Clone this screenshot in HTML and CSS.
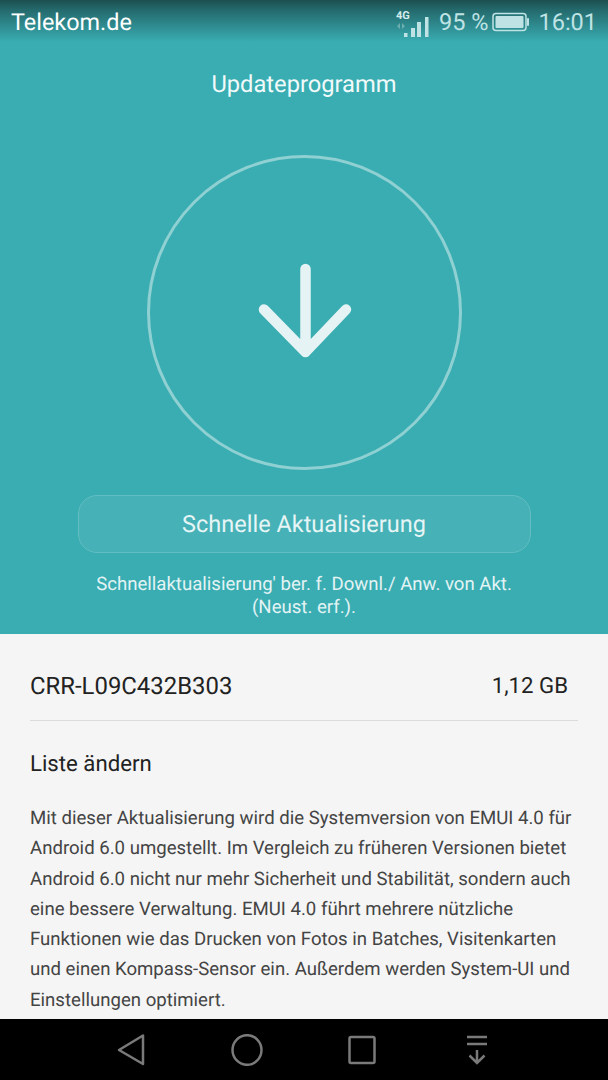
FILE: index.html
```html
<!DOCTYPE html>
<html>
<head>
    <title>Updateprogramm</title>
    <link rel="stylesheet" href="styles.css">
</head>
<body>
    <div class="phone">
        <div class="top">
            <div class="statusbar">
                <span class="carrier">Telekom.de</span>
                <div class="status-right">
                    <svg class="signal" width="34" height="32" viewBox="0 0 34 32">
                        <text x="1" y="13" class="net">4G</text>
                        <path d="M5 17l-3 3 3 3zM7 17l3 3-3 3z" fill="#fff" opacity="0.3"/>
                        <rect x="9" y="27" width="3.500" height="4" fill="#bfe3e4"/>
                        <rect x="16" y="22" width="4" height="9" fill="#bfe3e4"/>
                        <rect x="22" y="16" width="4" height="15" fill="#bfe3e4"/>
                        <rect x="30" y="11" width="3.500" height="20" fill="#bfe3e4"/>
                    </svg>
                    <span class="battery-pct">95 %</span>
                    <svg class="battery" width="38" height="20" viewBox="0 0 38 20">
                        <rect x="1" y="1.500" width="33" height="17" rx="3" fill="none" stroke="#bfe3e4" stroke-width="1.500"/>
                        <rect x="3.500" y="4" width="28" height="12" rx="1" fill="#bfe3e4"/>
                        <rect x="35" y="6" width="2" height="8" rx="1" fill="#bfe3e4"/>
                    </svg>
                    <span class="clock">16:01</span>
                </div>
            </div>
            <h1 class="title">Updateprogramm</h1>
            <div class="ring">
                <svg width="100" height="100" viewBox="0 0 100 100">
                    <path d="M51.500 6V89M10 46.500L51.500 89L92 46.500" fill="none" stroke="#e6f3f4" stroke-width="10.500" stroke-linecap="round" stroke-linejoin="round"/>
                </svg>
            </div>
            <div class="update-btn">Schnelle Aktualisierung</div>
            <p class="hint">Schnellaktualisierung' ber. f. Downl./ Anw. von Akt.<br>(Neust. erf.).</p>
        </div>
        <div class="details">
            <div class="version-row">
                <span>CRR-L09C432B303</span>
                <span class="size">1,12 GB</span>
            </div>
            <h2 class="list-title">Liste ändern</h2>
            <p class="changes">Mit dieser Aktualisierung wird die Systemversion von EMUI 4.0 für Android 6.0 umgestellt. Im Vergleich zu früheren Versionen bietet Android 6.0 nicht nur mehr Sicherheit und Stabilität, sondern auch eine bessere Verwaltung. EMUI 4.0 führt mehrere nützliche Funktionen wie das Drucken von Fotos in Batches, Visitenkarten und einen Kompass-Sensor ein. Außerdem werden System-UI und Einstellungen optimiert.</p>
        </div>
        <div class="navbar">
            <svg width="30" height="34" viewBox="0 0 30 34">
                <path d="M26 2.500V31L2 17z" fill="none" stroke="#7a7a7a" stroke-width="2.500" stroke-linejoin="round"/>
            </svg>
            <svg width="32" height="32" viewBox="0 0 32 32">
                <ellipse cx="16" cy="16" rx="14.500" ry="14.800" fill="none" stroke="#7a7a7a" stroke-width="2.500"/>
            </svg>
            <svg width="28" height="30" viewBox="0 0 28 30">
                <rect x="1.500" y="2" width="25" height="26" rx="1.500" fill="none" stroke="#7a7a7a" stroke-width="2.500"/>
            </svg>
            <svg width="24" height="32" viewBox="0 0 24 32">
                <path d="M2 3H22M2 10H22M12 16V29M4.500 21.500L12 29L19.500 21.500" fill="none" stroke="#7a7a7a" stroke-width="2.500"/>
            </svg>
        </div>
    </div>
</body>
</html>
```

FILE: styles.css
```css
* {
    box-sizing: border-box;
    margin: 0px;
}

body {
    font-family: Roboto, "Noto Sans", sans-serif;
    text-rendering: geometricPrecision;
    background: #000;
    overflow: hidden;
}

.phone {
    width: 608px;
    height: 1080px;
    display: flex;
    flex-direction: column;
}

.top {
    height: 634px;
    background: #39adb2;
    color: #fff;
    display: flex;
    flex-direction: column;
    align-items: center;
}

.statusbar {
    width: 100%;
    height: 44px;
    padding: 0 11px;
    display: flex;
    justify-content: space-between;
    align-items: center;
    background: linear-gradient(#1c4f50 0px, #246a6d 10px, #39adb2 42px);
}

.carrier {
    font-size: 23.400px;
    color: #fff;
}

.status-right {
    display: flex;
    align-items: center;
    color: #bfe3e4;
    font-size: 23.500px;
}

.net {
    font: bold 11px Roboto, sans-serif;
    fill: #d5ecec;
}

.signal {
    margin-right: 10px;
}

.battery {
    margin: 0 8px 0 4px;
}

.title {
    margin-top: 25px;
    font-size: 23.700px;
    font-weight: 400;
    line-height: 30px;
    color: #f1fafa;
}

.ring {
    width: 315px;
    height: 315px;
    margin-top: 56px;
    border: 3px solid #8fd0d2;
    border-radius: 50%;
    display: flex;
    justify-content: center;
    align-items: center;
}

.update-btn {
    width: 453px;
    height: 58px;
    margin-top: 25px;
    border: 1px solid #62bec2;
    border-radius: 19px;
    background: #46b1b6;
    color: #e6f5f5;
    font-size: 23.500px;
    display: flex;
    justify-content: center;
    align-items: center;
}

.hint {
    margin-top: 20px;
    font-size: 18.600px;
    line-height: 23px;
    text-align: center;
    color: #e3f3f4;
}

.details {
    flex: 1;
    min-height: 0;
    overflow: hidden;
    padding: 0 30px;
    background: #f5f5f5;
    color: #222;
}

.version-row {
    height: 87px;
    padding: 18px 10px 0 0;
    border-bottom: 1px solid #dcdcdc;
    display: flex;
    justify-content: space-between;
    align-items: center;
    font-size: 23.900px;
}

.size {
    font-size: 22.200px;
}

.list-title {
    margin-top: 28px;
    font-size: 22.200px;
    font-weight: 400;
    line-height: 30px;
}

.changes {
    margin-top: 24px;
    font-size: 18.600px;
    line-height: 30.300px;
    color: #444;
}

.navbar {
    height: 61px;
    background: #000;
    display: grid;
    grid-template-columns: repeat(4, 115px);
    justify-content: center;
    justify-items: center;
    align-items: center;
}
```
